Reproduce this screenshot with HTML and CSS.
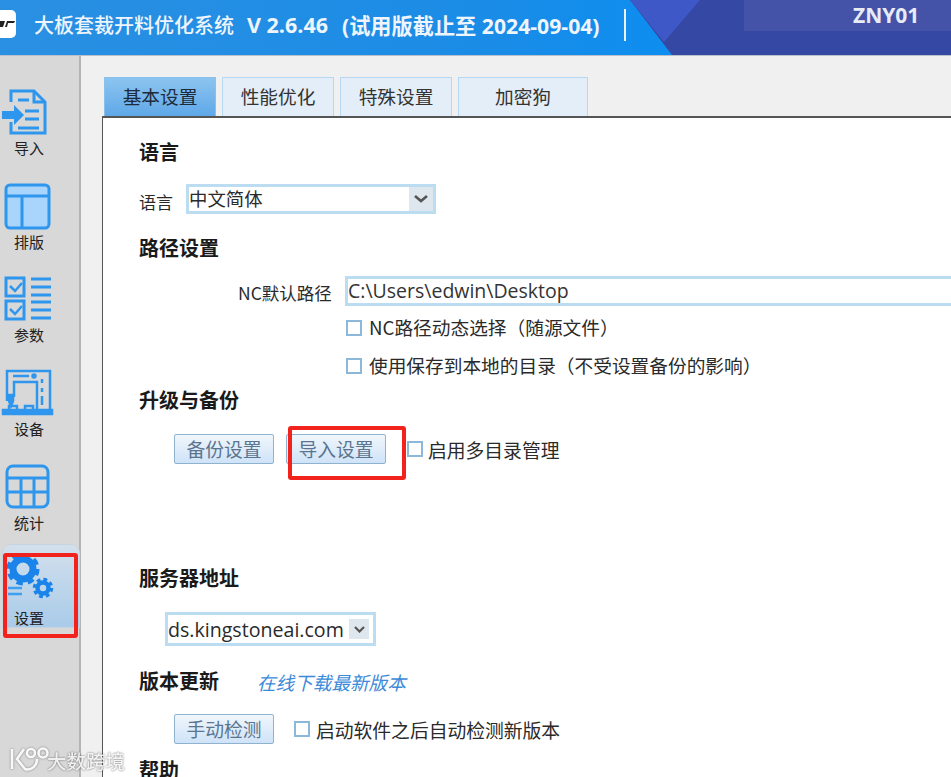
FILE: index.html
```html
<!DOCTYPE html>
<html lang="zh">
<head>
<meta charset="utf-8">
<title>大板套裁开料优化系统</title>
<link rel="stylesheet" href="styles.css">
</head>
<body>
<div class="app">
  <header class="topbar">
    <div class="logo"><svg width="16" height="8" viewBox="0 0 16 8"><path d="M0 1h6L4 7H0zM8 1h8l-1 2h-6l-1 4H6z" fill="#222"/></svg></div>
    <div class="title"><span class="title-cn">大板套裁开料优化系统</span><span class="title-ver">V 2.6.46</span><span class="title-trial">(试用版截止至 2024-09-04)</span></div>
    <div class="sep"></div>
    <svg class="deco" width="321" height="55" viewBox="0 0 321 55"><path d="M0 0H321V55H42z" fill="#3548a4"/><path d="M0 0H70L34 42z" fill="#3f58c8"/><path d="M114 0H321V31H114z" fill="#4453a8"/></svg>
    <div class="user">ZNY01</div>
  </header>
  <div class="body">
    <nav class="side">
      <div class="item">
        <svg class="ico" width="54" height="48" viewBox="0 0 54 48" fill="none" stroke="#2f96ee" stroke-width="3"><path d="M11 14V3H34L45 14V45H11V34"/><path d="M34 3V14H45" /><path d="M18 12H29M25 23H39M25 31H39M18 40H39"/><path d="M2 23H14V17L24 27L14 37V31H2z" fill="#2f96ee" stroke="none"/></svg>
        <span>导入</span>
      </div>
      <div class="item">
        <svg class="ico" width="54" height="48" viewBox="0 0 54 48" fill="#a9d4fb" stroke="#2f96ee" stroke-width="3"><rect x="6" y="3" width="43" height="43" rx="4"/><path d="M6 14H49M22 14V46" fill="none"/></svg>
        <span>排版</span>
      </div>
      <div class="item">
        <svg class="ico" width="54" height="48" viewBox="0 0 54 48" fill="none" stroke="#2f96ee" stroke-width="3"><rect x="6" y="3" width="18" height="18"/><rect x="6" y="26" width="18" height="18"/><path d="M10 11L15 16L22 8M10 34L15 39L22 31" stroke-width="2.5"/><path d="M31 4H51M31 12H51M31 20H51M31 27H51M31 35H51M31 43H51"/></svg>
        <span>参数</span>
      </div>
      <div class="item">
        <svg class="ico" width="54" height="48" viewBox="0 0 54 48" fill="none" stroke="#2f96ee" stroke-width="2.5"><path d="M7 32V2H50V42"/><path d="M13 7H29M42 10V14M42 19V23M42 27V36" /><circle cx="34" cy="7" r="1.5" fill="#2f96ee"/><path d="M14 28V13H37V42"/><path d="M9 26H13V32L11 37L9 32z" fill="#2f96ee"/><path d="M9 41V37H17V41M25 41V37H33V41"/><rect x="3" y="41" width="49" height="4" fill="#2f96ee"/></svg>
        <span>设备</span>
      </div>
      <div class="item">
        <svg class="ico" width="54" height="48" viewBox="0 0 54 48" fill="none" stroke="#2f96ee" stroke-width="3"><rect x="7" y="3" width="41" height="41" rx="6"/><path d="M7 15H48M7 29H48M21 15V44M34 15V44"/></svg>
        <span>统计</span>
      </div>
      <div class="item active">
        <svg class="ico" width="54" height="48" viewBox="0 0 54 48" fill="none"><circle cx="23" cy="14" r="10" stroke="#1a84ea" stroke-width="7"/><circle cx="23" cy="14" r="14" stroke="#1a84ea" stroke-width="5" stroke-dasharray="6.2 4.8"/><circle cx="43" cy="33" r="5.5" stroke="#1a84ea" stroke-width="4.5"/><circle cx="43" cy="33" r="8.5" stroke="#1a84ea" stroke-width="3.5" stroke-dasharray="3.7 3"/><path d="M8 33H22M8 39H22" stroke="#3f9ff0" stroke-width="2.5"/></svg>
        <span>设置</span>
      </div>
    </nav>
    <main class="main">
      <div class="tabs">
        <div class="tab tab-on">基本设置</div>
        <div class="tab">性能优化</div>
        <div class="tab">特殊设置</div>
        <div class="tab tab-wide">加密狗</div>
      </div>
      <section class="panel">
        <h2 class="sec s1">语言</h2>
        <div class="row r-lang">
          <span class="lbl">语言</span>
          <div class="select sel-lang"><span class="val">中文简体</span><span class="drop"><svg width="14" height="8" viewBox="0 0 14 8" fill="none" stroke="#555" stroke-width="2.6"><path d="M1 1L7 6L13 1"/></svg></span></div>
        </div>
        <h2 class="sec s2">路径设置</h2>
        <div class="row r-path">
          <span class="path-lbl">NC默认路径</span>
          <div class="input">C:\Users\edwin\Desktop</div>
        </div>
        <label class="row r-c1"><i class="cb"></i><span class="txt">NC路径动态选择（随源文件）</span></label>
        <label class="row r-c2"><i class="cb"></i><span class="txt">使用保存到本地的目录（不受设置备份的影响）</span></label>
        <h2 class="sec s3">升级与备份</h2>
        <div class="row r-btn">
          <button class="btn">备份设置</button>
          <button class="btn btn-b">导入设置</button>
          <label class="check-inline multi"><i class="cb"></i>启用多目录管理</label>
        </div>
        <h2 class="sec s4">服务器地址</h2>
        <div class="row r-srv">
          <div class="select sel-srv"><span class="val">ds.kingstoneai.com</span><span class="drop"><svg width="11" height="7" viewBox="0 0 11 7" fill="none" stroke="#555" stroke-width="2.2"><path d="M1 1L5.5 5.5L10 1"/></svg></span></div>
        </div>
        <div class="row r-ver"><h2 class="sec">版本更新</h2><span class="link">在线下载最新版本</span></div>
        <div class="row r-upd">
          <button class="btn">手动检测</button>
          <label class="check-inline auto"><i class="cb"></i>启动软件之后自动检测新版本</label>
        </div>
        <h2 class="sec s5">帮助</h2>
      </section>
    </main>
  </div>
  <div class="mark mark-side"></div>
  <div class="mark mark-btn"></div>
  <div class="wm"><svg width="44" height="26" viewBox="0 0 44 26" fill="none" stroke="#fff" stroke-width="2.6"><path d="M3 3V23M15 3L8 13L16 23C22 25 28 20 28 13"/><circle cx="22" cy="7" r="4"/><circle cx="34" cy="7" r="4.5"/></svg><span>大数跨境</span></div>
</div>
</body>
</html>
```
FILE: styles.css
```css
* { box-sizing: border-box; }
html, body { margin: 0; height: 100%; overflow: hidden; }
body { font-family: "Noto Sans CJK SC", "Noto Sans", sans-serif; color: #222; }
.app { position: relative; width: 951px; height: 777px; overflow: hidden; display: flex; flex-direction: column; background: #f0f0f0; }

.topbar { position: relative; flex: 0 0 56px; height: 56px; display: flex; align-items: center; background: linear-gradient(90deg, #2a90e2 0%, #1b8ce6 50%, #0a8ef2 75%); border-bottom: 1px solid #b9c0cc; color: #eef5fc; }
.logo { position: absolute; left: -12px; top: 10px; width: 28px; height: 28px; background: #fff; border-radius: 5px; display: flex; align-items: center; justify-content: flex-end; padding-right: 1px; }
.title { position: absolute; left: 34px; top: 8px; height: 32px; display: flex; align-items: center; white-space: nowrap; font-size: 20px; }
.title-cn { font-weight: 500; }
.title-ver { margin-left: 13px; font-family: "Open Sans", sans-serif; font-weight: 700; font-size: 21.5px; }
.title-trial { margin-left: 14px; font-family: "Open Sans", "Noto Sans CJK SC", sans-serif; font-weight: 700; font-size: 21.2px; }
.sep { position: absolute; left: 624px; top: 9px; width: 2px; height: 32px; background: #e6f2fc; }
.deco { position: absolute; left: 630px; top: 0; }
.user { position: absolute; left: 853px; top: 1px; font-family: "Open Sans", sans-serif; font-weight: 700; font-size: 21px; line-height: 28px; color: #e8ebf6; }

.body { flex: 1; display: flex; min-height: 0; }
.side { flex: 0 0 81px; background: #d8d8d8; border-right: 2px solid #b4b4b4; padding: 21px 0 0 3px; display: flex; flex-direction: column; gap: 11.7px; }
.item { height: 82px; width: 76px; display: flex; flex-direction: column; align-items: flex-start; padding-top: 11px; font-size: 15px; line-height: 20px; color: #222; }
.ico { display: block; margin-left: -3px; flex: none; }
.item span { margin-top: 2px; margin-left: 11px; }
.item.active { background: linear-gradient(180deg, #d3e0ec 0%, #a9cbe9 100%); border-radius: 8px 8px 0 0; box-shadow: 0 0 0 1px #c6d4e0; padding-top: 10px; }
.item.active span { margin-top: 5px; }

.main { flex: 1; min-width: 0; padding: 21px 0 0 21px; display: flex; flex-direction: column; }
.tabs { display: flex; gap: 6px; height: 39px; padding-left: 2px; }
.tab { width: 112px; height: 39px; padding-bottom: 4px; background: #e3eef8; border: 1px solid #b7d8f2; border-bottom: 0; display: flex; align-items: center; justify-content: center; font-size: 18.7px; color: #333; }
.tab-on { background: linear-gradient(180deg, #8cc4f0 0%, #5fa8e8 100%); border-color: #8ac0ea; color: #1d2b3a; }
.tab-wide { width: 130px; }

.panel { flex: 1; margin-right: -4px; background: #fff; border: 1px solid #555; border-top-width: 2px; border-bottom: 0; padding: 19px 0 0 36px; }
.sec { margin: 0; height: 30px; line-height: 30px; font-size: 20px; font-weight: 700; color: #1a1a1a; }
.row { display: flex; align-items: center; font-size: 18.8px; color: #2a2a2a; }
.r-lang { height: 30px; margin-top: 17px; }
.lbl { font-size: 17px; width: 47px; padding-top: 5px; }
.select { display: flex; align-items: center; background: #fff; border: 3px solid #bcdcf2; }
.val { flex: 1; white-space: nowrap; }
.drop { display: flex; align-items: center; justify-content: center; background: #dfe7ee; }
.sel-lang { width: 250px; height: 30px; font-size: 18.4px; }
.sel-lang .val { line-height: 24px; padding-bottom: 3px; }
.sel-lang .drop { width: 24px; height: 24px; }
.s2 { margin-top: 19px; }
.r-path { height: 30px; margin-top: 13px; }
.path-lbl { width: 206px; padding-left: 99px; font-size: 17.5px; white-space: nowrap; padding-top: 3px; }
.input { flex: 1; height: 30px; border: 3px solid #bcdcf2; border-right: 0; font-family: "Open Sans", sans-serif; font-size: 19.5px; line-height: 24px; white-space: nowrap; color: #333; }
.cb { flex: none; display: block; width: 16px; height: 16px; border: 2px solid #8cb9da; background: #fff; }
.r-c1, .r-c2 { height: 30px; padding-left: 207px; gap: 7px; font-size: 18.7px; }
.txt { padding-bottom: 4px; white-space: nowrap; }
.r-c1 { margin-top: 7px; }
.r-c2 { margin-top: 8px; }
.s3 { margin-top: 4px; }
.r-btn { height: 30px; margin-top: 19px; padding-left: 35px; }
.btn { width: 100px; height: 30px; padding: 0; border: 1px solid #8fb2cf; border-radius: 2px; background: linear-gradient(180deg, #f0f6fc 0%, #cfe3f8 100%); font-family: inherit; font-size: 18.8px; line-height: 26px; color: #5a7590; }
.btn-b { margin-left: 12px; }
.check-inline { display: flex; align-items: center; gap: 5px; }
.multi { margin-left: 21px; }
.auto { margin-left: 20px; gap: 6px; }
.s4 { margin-top: 99px; }
.r-srv { height: 34px; margin-top: 19px; padding-left: 26px; }
.sel-srv { width: 211px; height: 34px; font-family: "Open Sans", sans-serif; font-size: 19.6px; }
.sel-srv .drop { width: 20px; height: 20px; margin-right: 4px; }
.r-ver { height: 30px; margin-top: 20px; }
.link { margin-left: 38px; font-size: 18.6px; font-style: italic; color: #3c8ad8; }
.r-upd { height: 30px; margin-top: 18px; padding-left: 35px; }
.s5 { margin-top: 11px; }

.mark { position: absolute; border: 4px solid #f2231c; border-radius: 3px; }
.mark-side { left: 3px; top: 553px; width: 75px; height: 85px; }
.mark-btn { left: 288px; top: 426px; width: 118px; height: 54px; }
.wm { position: absolute; left: 9px; top: 746px; display: flex; align-items: center; color: #f4f4f4; font-size: 19.5px; font-weight: 500; opacity: .85; text-shadow: 0 0 2px rgba(50,50,50,.9); white-space: nowrap; }
.wm svg { flex: none; margin-top: -4px; margin-right: -6px; filter: drop-shadow(0 0 1px rgba(70,70,70,.7)); }
```
